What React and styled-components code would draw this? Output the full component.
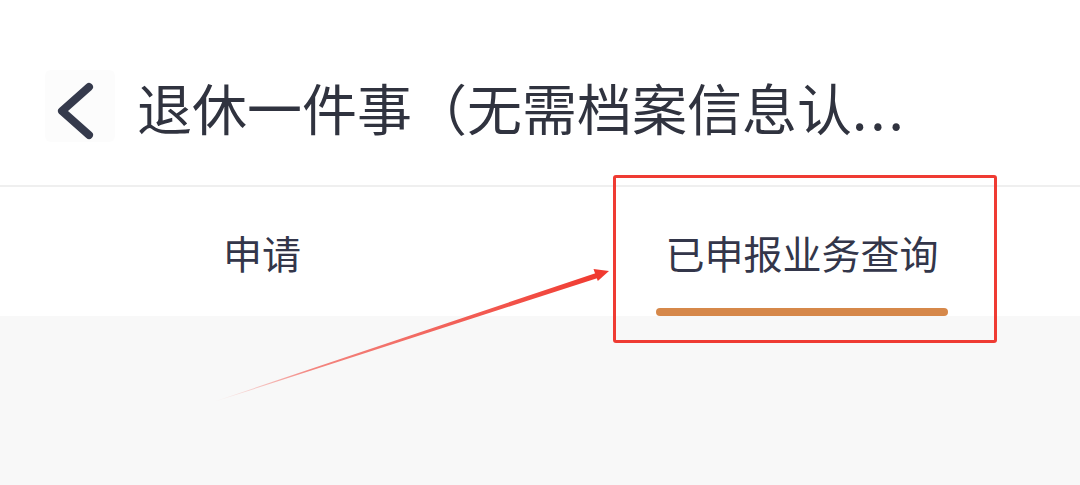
import React from "react";
import styled, { createGlobalStyle } from "styled-components";

const GlobalStyle = createGlobalStyle`
  html, body {
    margin: 0;
    padding: 0;
    background: #f7f7f7;
  }
  body {
    font-family: "Noto Sans CJK SC", "Noto Sans", sans-serif;
  }
`;

const Page = styled.div`
  position: relative;
  width: 1080px;
  height: 485px;
  overflow: hidden;
  background: #f8f8f8;
`;

const NavBar = styled.header`
  display: flex;
  align-items: center;
  height: 187px;
  padding-top: 26px;
  box-sizing: border-box;
  background: #ffffff;
  border-bottom: 2px solid #efefef;
`;

const BackButton = styled.button`
  display: flex;
  align-items: center;
  justify-content: center;
  width: 70px;
  height: 72px;
  margin-left: 45px;
  padding: 0;
  border: none;
  border-radius: 6px;
  background: #fcfcfc;
  cursor: pointer;
`;

const Title = styled.h1`
  margin: 0 0 0 22px;
  font-size: 55px;
  font-weight: 400;
  line-height: 1.2;
  color: #30333f;
  white-space: nowrap;
`;

const Ellipsis = styled.span`
  letter-spacing: 3px;
`;

const TabBar = styled.nav`
  display: flex;
  height: 129px;
  background: #ffffff;
`;

const Tab = styled.div`
  flex: 1;
  display: flex;
  flex-direction: column;
  align-items: center;
  padding: 42px 16px 0 0;
  box-sizing: border-box;
  cursor: pointer;
`;

const TabLabel = styled.span`
  font-size: 39px;
  line-height: 46px;
  color: #33364a;
`;

const Indicator = styled.div`
  width: 292px;
  height: 9px;
  margin-top: 33px;
  border-radius: 5px;
  background: ${(p) => (p.$active ? "#d6884a" : "transparent")};
`;

const Highlight = styled.div`
  position: absolute;
  left: 613px;
  top: 175px;
  width: 384px;
  height: 168px;
  box-sizing: border-box;
  border: 3px solid #ef3b33;
  border-radius: 3px;
  pointer-events: none;
`;

const ArrowLayer = styled.svg`
  position: absolute;
  left: 0;
  top: 0;
  pointer-events: none;
`;

const tabs = ["申请", "已申报业务查询"];

export default function App() {
  return (
    <>
      <GlobalStyle />
      <Page>
        <NavBar>
          <BackButton aria-label="返回">
            <svg width="70" height="72" viewBox="0 0 70 72">
              <path
                d="M44 17 L17 41 L44 65"
                fill="none"
                stroke="#353a4c"
                strokeWidth="8"
                strokeLinecap="round"
                strokeLinejoin="round"
              />
            </svg>
          </BackButton>
          <Title>
            退休一件事（无需档案信息认<Ellipsis>...</Ellipsis>
          </Title>
        </NavBar>
        <TabBar>
          {tabs.map((t, i) => (
            <Tab key={t}>
              <TabLabel>{t}</TabLabel>
              <Indicator $active={i === 1} />
            </Tab>
          ))}
        </TabBar>
        <Highlight />
        <ArrowLayer width="1080" height="485" viewBox="0 0 1080 485">
          <defs>
            <linearGradient
              id="shaft"
              gradientUnits="userSpaceOnUse"
              x1="215"
              y1="401"
              x2="600"
              y2="274"
            >
              <stop offset="0" stopColor="#f03a30" stopOpacity="0" />
              <stop offset="0.25" stopColor="#f03a30" stopOpacity="0.6" />
              <stop offset="1" stopColor="#f03a30" stopOpacity="1" />
            </linearGradient>
          </defs>
          <polygon
            points="215,401.2 215.2,401.6 599.4,277.4 597.6,272.4"
            fill="url(#shaft)"
          />
          <polygon points="609,271 593.5,269 597.8,281" fill="#f03a30" />
        </ArrowLayer>
      </Page>
    </>
  );
}
